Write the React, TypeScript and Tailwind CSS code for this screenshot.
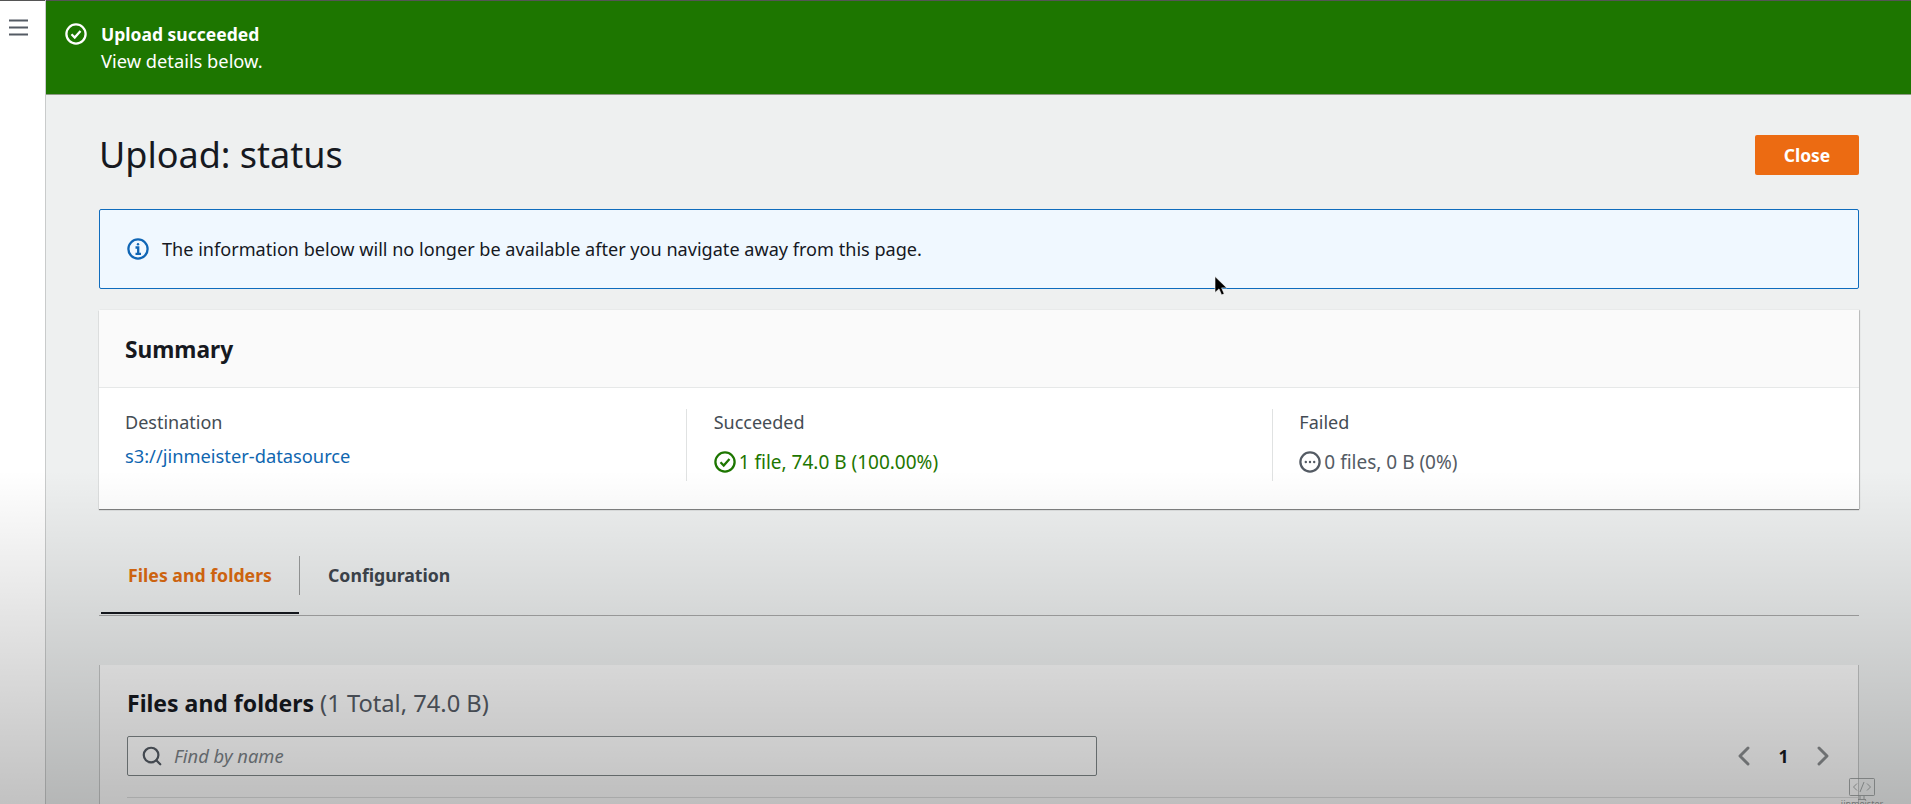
import React from "react";
import { Search, ChevronLeft, ChevronRight } from "lucide-react";

function CheckCircle({ className }: { className: string }) {
  return (
    <svg viewBox="0 0 22 22" fill="none" stroke="currentColor" strokeWidth="2.3" className={className}>
      <circle cx="11" cy="11" r="9.6" />
      <path d="M6.5 11.3l3.2 3.2 5.8-6.5" />
    </svg>
  );
}

export default function App() {
  return (
    <div className="relative flex h-[804px] w-[1911px] overflow-hidden bg-white text-[#16191f] font-['Noto_Sans',sans-serif]">
      <aside className="w-[45px] shrink-0 border-t border-[#555] bg-white pl-[9px] pt-[18px]">
        <svg viewBox="0 0 19 17" className="h-[17px] w-[19px]" fill="none" stroke="#545b64" strokeWidth="2.2">
          <path d="M0 1.5h19M0 8.5h19M0 15.5h19" />
        </svg>
      </aside>
      <div className="flex min-w-0 flex-1 flex-col border-l border-[#c9cbcb] bg-[#eef0f0]">
        <div className="flex h-[95px] shrink-0 items-start gap-[14px] border-t border-[#555] border-b border-b-[#8d9a84] bg-[#1d7600] pl-[19px] pt-[20px] text-white">
          <CheckCircle className="mt-[2px] h-[22px] w-[22px]" />
          <div>
            <div className="text-[17.5px] font-bold leading-[27px]">Upload succeeded</div>
            <div className="text-[18.3px] leading-[25px]">View details below.</div>
          </div>
        </div>

        <main className="flex flex-1 flex-col pl-[53px] pr-[52px]">
          <div className="flex h-[114px] shrink-0 items-center justify-between pt-[6px]">
            <h1 className="text-[36px] font-normal">Upload: status</h1>
            <button className="h-[40px] w-[104px] rounded-[2px] bg-[#ec6b12] text-[17.5px] font-bold text-white">Close</button>
          </div>

          <div className="flex h-[80px] shrink-0 items-center gap-[13px] rounded-[2px] border border-[#0f6cbd] bg-[#f0f8ff] pl-[27px] text-[18.1px]">
            <svg viewBox="0 0 22 22" fill="none" className="h-[22px] w-[22px] text-[#1066b5]" stroke="currentColor" strokeWidth="2.3">
              <circle cx="11" cy="11" r="9.6" />
              <path d="M8.5 9.5H11.2V15.5M8.5 15.8H14" />
              <circle cx="11" cy="6.3" r="1.2" fill="currentColor" stroke="none" />
            </svg>
            <span className="pt-[2px]">The information below will no longer be available after you navigate away from this page.</span>
          </div>

          <section className="mt-[21px] flex h-[199px] shrink-0 flex-col bg-white shadow-[0_1px_1px_rgba(0,0,0,0.45),1px_0_1px_rgba(0,0,0,0.15)]">
            <div className="flex h-[78px] items-center border-b border-[#e6e8e8] bg-[#fafafa] pl-[26px] pt-[3px] text-[22.7px] font-bold">Summary</div>
            <div className="grid flex-1 grid-cols-3 pt-[21px] text-[18px] leading-[26px]">
              <div className="pl-[26px]">
                <div className="text-[#444c54]">Destination</div>
                <a className="mt-[8px] block text-[18.3px] text-[#0f66b0]">s3://jinmeister-datasource</a>
              </div>
              <div className="h-[72px] border-l border-[#e0e2e2] pl-[27px]">
                <div className="text-[#444c54]">Succeeded</div>
                <div className="mt-[14px] flex items-center gap-[3px] text-[19px] text-[#1d7600]">
                  <CheckCircle className="h-[22px] w-[22px]" />
                  <span>1 file, 74.0 B (100.00%)</span>
                </div>
              </div>
              <div className="h-[72px] border-l border-[#e0e2e2] pl-[26px]">
                <div className="text-[#444c54]">Failed</div>
                <div className="mt-[14px] flex items-center gap-[3px] text-[19px] text-[#545b64]">
                  <svg viewBox="0 0 22 22" className="h-[22px] w-[22px]" fill="none" stroke="currentColor" strokeWidth="2.3">
                    <circle cx="11" cy="11" r="9.6" />
                    <path d="M6.8 11h.01M11 11h.01M15.2 11h.01" strokeLinecap="round" strokeWidth="2.4" />
                  </svg>
                  <span>0 files, 0 B (0%)</span>
                </div>
              </div>
            </div>
          </section>

          <div className="mt-[46px] flex h-[61px] shrink-0 items-start border-b border-[#a9a9a9]">
            <div className="ml-[2px] flex h-[59px] w-[198px] items-center justify-center border-b-[2px] border-[#16191f] pb-[17px] text-[17.7px] font-bold text-[#dd6b10]">
              Files and folders
            </div>
            <div className="my-[1px] flex h-[39px] items-center border-l border-[#9a9c9c] pl-[28px] text-[17.7px] font-bold text-[#3f464e]">Configuration</div>
          </div>

          <section className="mt-[49px] flex flex-1 flex-col border-l border-r border-[#c4c6c6] bg-[#fafafa] pl-[27px]">
            <div className="pt-[24px] text-[23px] leading-[28px]">
              <span className="font-bold">Files and folders</span>{" "}
              <span className="text-[23.7px] text-[#545b64]">(1 Total, 74.0 B)</span>
            </div>
            <div className="mt-[19px] flex items-center">
              <div className="flex h-[40px] w-[970px] items-center gap-[11px] rounded-[2px] border border-[#7f8688] bg-white pl-[13px]">
                <Search className="h-[22px] w-[22px] text-[#545b64]" strokeWidth={2.4} />
                <span className="text-[18.4px] italic text-[#7b8287]">Find by name</span>
              </div>
              <div className="ml-[631px] flex items-center gap-[15.5px]">
                <ChevronLeft className="h-[32px] w-[32px] text-[#8a8d8f]" strokeWidth={2.2} />
                <span className="w-[16px] text-center text-[17.5px] font-bold">1</span>
                <ChevronRight className="h-[32px] w-[32px] text-[#8a8d8f]" strokeWidth={2.2} />
              </div>
            </div>
            <div className="mt-[21px] border-t border-[#dcdddd]" />
          </section>
        </main>
      </div>

      <div className="pointer-events-none absolute inset-x-0 bottom-0 h-[334px] bg-gradient-to-b from-black/0 to-black/[0.24]" />

      <svg viewBox="0 0 14 22" className="pointer-events-none absolute left-[1214px] top-[275px] h-[23px] w-[14px]">
        <path d="M1 1v16l4-3.6 2.6 6 2.6-1.1-2.6-5.9h5.2z" fill="#000" stroke="#fff" strokeWidth="0.6" />
      </svg>

      <div className="pointer-events-none absolute left-[1836px] top-[778px] flex w-[52px] flex-col items-center text-[#6f7272]">
        <svg viewBox="0 0 26 22" fill="none" stroke="currentColor" strokeWidth="0.8" className="h-[22px] w-[26px]">
          <rect x="0.5" y="0.5" width="25" height="17" rx="1" />
          <path d="M8 5.5L4.5 9 8 12.5M18 5.5L21.5 9 18 12.5M15 4l-4 10M11 18v3M15 18v3M9 21.5h8" />
        </svg>
        <span className="-mt-[1px] text-[9px] leading-[10px]">jinmeister</span>
      </div>
    </div>
  );
}
